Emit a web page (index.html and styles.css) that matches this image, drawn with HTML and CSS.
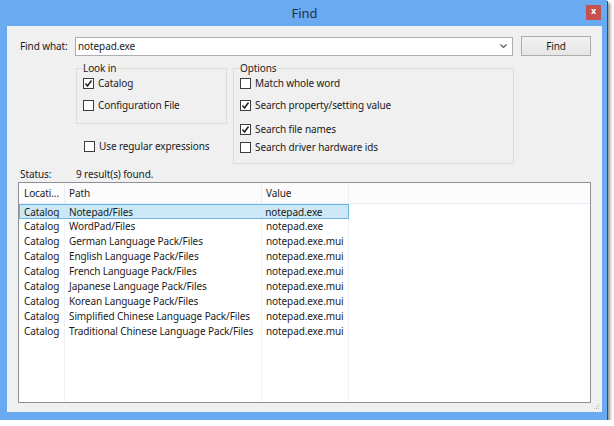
FILE: index.html
```html
<!DOCTYPE html>
<html>
<head>
<meta charset="utf-8">
<link rel="stylesheet" href="styles.css">
</head>
<body>
<div class="window">
  <div class="titlebar">
    <span></span>
    <span class="title">Find</span>
    <span class="close">x</span>
  </div>
  <div class="client">
    <div class="find-row">
      <span class="lbl">Find what:</span>
      <div class="combo">
        <span class="combo-text">notepad.exe</span>
        <svg class="chev" width="7" height="5" viewBox="0 0 7 5"><polyline points="0.5,0.5 3.5,3.5 6.5,0.5" fill="none" stroke="#555" stroke-width="1.1"/></svg>
      </div>
      <div class="btn">Find</div>
    </div>

    <div class="groups">
      <div class="leftcol">
        <fieldset class="group lookin">
          <legend>Look in</legend>
          <div class="check r1"><span class="box on"><svg width="9" height="9" viewBox="0 0 9 9"><polyline points="1.5,4.5 3.5,7 7.5,1.5" fill="none" stroke="#222" stroke-width="1.5"/></svg></span>Catalog</div>
          <div class="check r2"><span class="box"></span>Configuration File</div>
        </fieldset>
        <div class="check regex"><span class="box"></span>Use regular expressions</div>
      </div>
      <fieldset class="group options">
        <legend>Options</legend>
        <div class="check r1"><span class="box"></span>Match whole word</div>
        <div class="check r2"><span class="box on"><svg width="9" height="9" viewBox="0 0 9 9"><polyline points="1.5,4.5 3.5,7 7.5,1.5" fill="none" stroke="#222" stroke-width="1.5"/></svg></span>Search property/setting value</div>
        <div class="check r3"><span class="box on"><svg width="9" height="9" viewBox="0 0 9 9"><polyline points="1.5,4.5 3.5,7 7.5,1.5" fill="none" stroke="#222" stroke-width="1.5"/></svg></span>Search file names</div>
        <div class="check r4"><span class="box"></span>Search driver hardware ids</div>
      </fieldset>
    </div>

    <div class="status">
      <span class="status-lbl">Status:</span>
      <span>9 result(s) found.</span>
    </div>

    <div class="list">
      <div class="row head">
        <span class="c1">Locati...</span>
        <span class="c2">Path</span>
        <span class="c3">Value</span>
        <span class="cfill"></span>
      </div>
      <div class="body">
        <div class="row sel"><span class="c1">Catalog</span><span class="c2">Notepad/Files</span><span class="c3">notepad.exe</span></div>
        <div class="row"><span class="c1">Catalog</span><span class="c2">WordPad/Files</span><span class="c3">notepad.exe</span></div>
        <div class="row"><span class="c1">Catalog</span><span class="c2">German Language Pack/Files</span><span class="c3">notepad.exe.mui</span></div>
        <div class="row"><span class="c1">Catalog</span><span class="c2">English Language Pack/Files</span><span class="c3">notepad.exe.mui</span></div>
        <div class="row"><span class="c1">Catalog</span><span class="c2">French Language Pack/Files</span><span class="c3">notepad.exe.mui</span></div>
        <div class="row"><span class="c1">Catalog</span><span class="c2">Japanese Language Pack/Files</span><span class="c3">notepad.exe.mui</span></div>
        <div class="row"><span class="c1">Catalog</span><span class="c2">Korean Language Pack/Files</span><span class="c3">notepad.exe.mui</span></div>
        <div class="row"><span class="c1">Catalog</span><span class="c2">Simplified Chinese Language Pack/Files</span><span class="c3">notepad.exe.mui</span></div>
        <div class="row"><span class="c1">Catalog</span><span class="c2">Traditional Chinese Language Pack/Files</span><span class="c3">notepad.exe.mui</span></div>
      </div>
    </div>
    <div class="grip">
      <svg width="6" height="6" viewBox="0 0 6 6" fill="#b9b9b9"><rect x="4" y="0" width="1" height="1"/><rect x="2" y="2" width="1" height="1"/><rect x="4" y="2" width="1" height="1"/><rect x="0" y="4" width="1" height="1"/><rect x="2" y="4" width="1" height="1"/><rect x="4" y="4" width="1" height="1"/></svg>
    </div>
  </div>
</div>
</body>
</html>
```

FILE: styles.css
```css
html, body {
  margin: 0;
  padding: 0;
  background: #ffffff;
}
body {
  font-family: "Noto Sans", "Open Sans", sans-serif;
  font-size: 10px;
  letter-spacing: -0.1px;
  color: #1b1b1b;
}
.window {
  width: 607px;
  height: 420px;
  box-sizing: border-box;
  background: #69aaf1;
  padding: 0 5px 8px 7px;
  display: flex;
  flex-direction: column;
  box-shadow: 1px 1px 0 #4a4a4a, 3px 3px 3px rgba(0, 0, 0, 0.45);
}
.titlebar {
  height: 26px;
  display: grid;
  grid-template-columns: 1fr auto 1fr;
  align-items: center;
}
.title {
  font-size: 13px;
  letter-spacing: 0;
  color: #24313f;
  line-height: 26px;
}
.close {
  justify-self: end;
  width: 15px;
  height: 15px;
  margin-right: 1px;
  margin-top: -1px;
  background: #c75050;
  color: #fff;
  font-family: "DejaVu Sans", sans-serif;
  font-size: 8px;
  font-weight: bold;
  line-height: 14px;
  text-align: center;
}
.client {
  flex: 1;
  background: #f0f0f0;
  padding: 10px 11px 9px 11px;
  display: flex;
  flex-direction: column;
  min-height: 0;
}
.find-row {
  display: flex;
  align-items: center;
  height: 20px;
}
.lbl {
  width: 55px;
  margin-left: 2px;
}
.combo {
  width: 438px;
  height: 19px;
  box-sizing: border-box;
  border: 1px solid #abadb3;
  background: #fff;
  display: flex;
  align-items: center;
  justify-content: space-between;
  padding: 0 5px 0 2px;
}
.chev {
  display: block;
}
.btn {
  margin-left: 8px;
  width: 70px;
  height: 20px;
  box-sizing: border-box;
  border: 1px solid #acacac;
  background: linear-gradient(#f2f2f2, #e6e6e6);
  text-align: center;
  line-height: 18px;
}
.groups {
  display: flex;
  margin-top: 6px;
  margin-left: 58px;
  gap: 6px;
}
.leftcol {
  width: 151px;
  display: flex;
  flex-direction: column;
}
.group {
  margin: 0;
  border: 1px solid #dcdcdc;
  padding: 1px 6px 11px 6px;
  box-sizing: border-box;
}
.group legend {
  padding: 0;
  line-height: 13px;
  height: 13px;
}
.lookin {
  width: 151px;
}
.options {
  width: 281px;
  padding-bottom: 9px;
}
.check {
  display: flex;
  align-items: center;
  height: 14px;
  line-height: 14px;
  white-space: nowrap;
}
.box {
  width: 11px;
  height: 11px;
  box-sizing: border-box;
  border: 1px solid #3d3d3d;
  background: #fff;
  margin-right: 4px;
  display: flex;
  align-items: center;
  justify-content: center;
}
.box svg {
  display: block;
}
.lookin .r2 { margin-top: 8px; }
.options .r2 { margin-top: 8px; }
.options .r3 { margin-top: 10px; }
.options .r4 { margin-top: 4px; }
.regex {
  margin-top: 15px;
  padding-left: 8px;
}
.status {
  display: flex;
  margin-top: 3px;
  height: 14px;
  line-height: 14px;
}
.status-lbl {
  width: 56px;
  margin-left: 2px;
}
.list {
  margin-top: 1px;
  flex: 1;
  border: 1px solid #8d9097;
  background: #fff;
  display: flex;
  flex-direction: column;
  min-height: 0;
}
.row {
  display: flex;
  height: 15px;
  line-height: 15px;
  white-space: nowrap;
}
.row span {
  box-sizing: border-box;
  overflow: hidden;
}
.c1 { width: 46px; padding-left: 5px; }
.c2 { width: 197px; padding-left: 4px; }
.c3 { width: 87px; padding-left: 4px; }
.head {
  height: 20px;
  line-height: 20px;
  background: #fcfcfc;
  border-bottom: 1px solid #e6eff8;
}
.head span {
  border-right: 1px solid #eaeef2;
}
.head .cfill {
  flex: 1;
  border-right: none;
}
.body {
  flex: 1;
  background:
    linear-gradient(#edf3f9, #edf3f9) 45px 0 / 1px 100% no-repeat,
    linear-gradient(#edf3f9, #edf3f9) 242px 0 / 1px 100% no-repeat,
    linear-gradient(#edf3f9, #edf3f9) 329px 0 / 1px 100% no-repeat,
    #fff;
}
.sel {
  width: 330px;
  box-sizing: border-box;
  background: #cce8f6;
  border: 1px solid #6ab5e3;
}
.sel .c1 { width: 45px; padding-left: 4px; }
.grip {
  height: 0;
  display: flex;
  justify-content: flex-end;
  margin-right: -9px;
}
.grip svg {
  display: block;
  margin-top: 1px;
}
```
